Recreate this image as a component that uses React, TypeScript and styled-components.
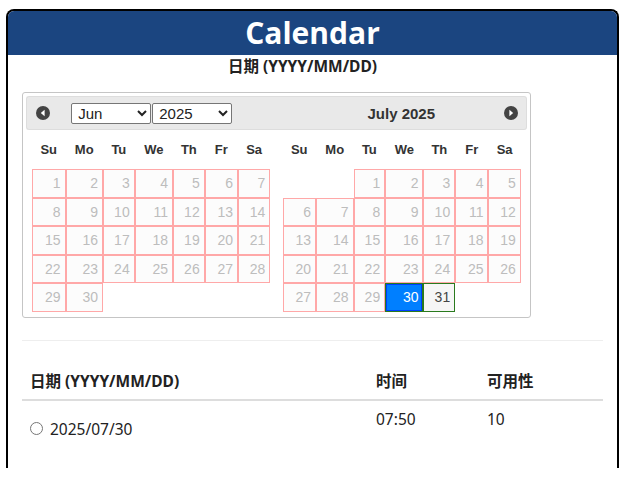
import React, { FC } from 'react';
import styled, { createGlobalStyle } from 'styled-components';

const GlobalStyle = createGlobalStyle`
    html, body {
        margin: 0;
        padding: 0;
        background: #fff;
    }
    body {
        font-family: 'Noto Sans', 'Noto Sans CJK SC', sans-serif;
        color: #222;
    }
`;

const Page = styled.div`
    padding: 9px 7px 0 6px;
`;

const Frame = styled.div`
    box-sizing: border-box;
    height: 459px;
    border: 2px solid #000;
    border-bottom: none;
    border-radius: 8px 8px 0 0;
    overflow: hidden;
`;

const TitleBar = styled.h1`
    margin: 0;
    height: 44px;
    background: #1b4580;
    color: #fff;
    font-family: 'Open Sans', sans-serif;
    font-weight: 700;
    font-size: 30px;
    line-height: 44px;
    text-align: center;
`;

const Subtitle = styled.div`
    padding-right: 20px;
    font-weight: 700;
    font-size: 15.5px;
    line-height: 22px;
    text-align: center;
    color: #222;
`;

const Content = styled.div`
    padding: 0 14px;
`;

const Datepicker = styled.div`
    box-sizing: border-box;
    width: 509px;
    margin-top: 15px;
    padding: 3px 3px 5px;
    border: 1px solid #c5c5c5;
    border-radius: 3px;
    display: grid;
    grid-template-columns: 1fr 1fr;
    font-family: 'Liberation Sans', Arial, sans-serif;
`;

const Group = styled.div`
    display: flex;
    flex-direction: column;
`;

const GroupHeader = styled.div<{ $last?: boolean }>`
    box-sizing: border-box;
    height: 34px;
    background: #e9e9e9;
    border: 1px solid #dddddd;
    border-left-width: ${({ $last }) => ($last ? 0 : 1)}px;
    border-right-width: ${({ $last }) => ($last ? 1 : 0)}px;
    border-radius: ${({ $last }) => ($last ? '0 3px 3px 0' : '3px 0 0 3px')};
    display: grid;
    grid-template-columns: 1fr auto 1fr;
    align-items: center;
`;

const NavIcon = styled.svg<{ $side: 'start' | 'end' }>`
    width: 14px;
    height: 14px;
    justify-self: ${({ $side }) => $side};
    margin: ${({ $side }) => ($side === 'start' ? '0 0 0 9px' : '0 8px 0 0')};
    grid-column: ${({ $side }) => ($side === 'start' ? 1 : 3)};
    grid-row: 1;
`;

const Selects = styled.div`
    grid-column: 2;
    grid-row: 1;
    display: flex;
    gap: 1px;
`;

const Select = styled.select`
    box-sizing: border-box;
    width: 80px;
    height: 21px;
    font-family: 'Liberation Sans', Arial, sans-serif;
    font-size: 15px;
    color: #222;
    border: 1px solid #767676;
    border-radius: 2px;
    background: #fff;
    padding: 0 2px;
`;

const MonthTitle = styled.div`
    grid-column: 2;
    grid-row: 1;
    font-weight: 700;
    font-size: 15px;
    color: #333;
`;

const columns = '33.5px 37.5px 31.7px 38.3px 31.7px 33.3px 32.4px';

const DayNames = styled.div`
    display: grid;
    grid-template-columns: ${columns};
    height: 39px;
    align-items: center;
    padding-left: 6px;
`;

const DayName = styled.span`
    text-align: center;
    font-weight: 700;
    font-size: 13px;
    color: #333;
`;

const Days = styled.div`
    display: grid;
    grid-template-columns: ${columns};
    grid-auto-rows: 28.5px;
    padding-left: 6px;
`;

type CellKind = 'disabled' | 'active' | 'available' | 'empty';

const cellBorder: Record<CellKind, string> = {
    disabled: '1px solid #ffa8a8',
    active: '1px solid #2a7a1e',
    available: '1px solid #2a7a1e',
    empty: '1px solid transparent',
};

const Cell = styled.div<{ $kind: CellKind }>`
    box-sizing: border-box;
    border: ${({ $kind }) => cellBorder[$kind]};
    background: ${({ $kind }) =>
        $kind === 'disabled' ? '#fcfcfc' : $kind === 'empty' ? 'transparent' : '#f6f6f6'};
    display: flex;
`;

const CellInner = styled.span<{ $kind: CellKind }>`
    flex: 1;
    box-sizing: border-box;
    border: 1px solid
        ${({ $kind }) => ($kind === 'active' ? '#003eff' : 'transparent')};
    background: ${({ $kind }) => ($kind === 'active' ? '#007fff' : 'transparent')};
    color: ${({ $kind }) =>
        $kind === 'active' ? '#fff' : $kind === 'available' ? '#454545' : '#bdbdbd'};
    font-size: 14px;
    padding-right: 3px;
    display: flex;
    align-items: center;
    justify-content: flex-end;
`;

const Divider = styled.hr`
    margin: 22px 0 0;
    border: 0;
    border-top: 1px solid #eeeeee;
`;

const Table = styled.table`
    width: 100%;
    table-layout: fixed;
    margin-top: 22px;
    border-collapse: collapse;
    font-size: 15.5px;
    color: #222;
`;

const Th = styled.th<{ $w?: number }>`
    width: ${({ $w }) => ($w ? `${$w}px` : 'auto')};
    padding: 8px;
    text-align: left;
    font-weight: 700;
    line-height: 20px;
    vertical-align: bottom;
    border-bottom: 2px solid #dddddd;
    white-space: nowrap;
`;

const Td = styled.td`
    padding: 8px;
    line-height: 20px;
    vertical-align: top;
`;

const DateLabel = styled.label`
    display: flex;
    align-items: center;
    padding-top: 10px;
`;

const Radio = styled.input`
    width: 13px;
    height: 13px;
    margin: 0 7px 0 0;
`;

const WEEK = ['Su', 'Mo', 'Tu', 'We', 'Th', 'Fr', 'Sa'];

interface Month {
    offset: number;
    days: number;
}

const dayKind = (month: 'june' | 'july', day: number): CellKind => {
    if (month === 'july' && day === 30) return 'active';
    if (month === 'july' && day === 31) return 'available';
    return 'disabled';
};

const Prev: FC = () => (
    <NavIcon $side="start" viewBox="0 0 14 14">
        <circle cx="7" cy="7" r="7" fill="#444" />
        <path d="M8.6 3.8 L4.8 7 L8.6 10.2 Z" fill="#fff" />
    </NavIcon>
);

const Next: FC = () => (
    <NavIcon $side="end" viewBox="0 0 14 14">
        <circle cx="7" cy="7" r="7" fill="#444" />
        <path d="M5.4 3.8 L9.2 7 L5.4 10.2 Z" fill="#fff" />
    </NavIcon>
);

const MonthGrid: FC<{ name: 'june' | 'july'; month: Month }> = ({ name, month }) => {
    const cells: React.ReactNode[] = [];
    for (let i = 0; i < month.offset; i++) {
        cells.push(<Cell key={`e${i}`} $kind="empty" />);
    }
    for (let d = 1; d <= month.days; d++) {
        const kind = dayKind(name, d);
        cells.push(
            <Cell key={d} $kind={kind}>
                <CellInner $kind={kind}>{d}</CellInner>
            </Cell>
        );
    }
    return (
        <>
            <DayNames>
                {WEEK.map((w) => (
                    <DayName key={w}>{w}</DayName>
                ))}
            </DayNames>
            <Days>{cells}</Days>
        </>
    );
};

const App: FC = () => (
    <Page>
        <GlobalStyle />
        <Frame>
            <TitleBar>Calendar</TitleBar>
            <Subtitle>日期 (YYYY/MM/DD)</Subtitle>
            <Content>
                <Datepicker>
                    <Group>
                        <GroupHeader>
                            <Prev />
                            <Selects>
                                <Select defaultValue="6">
                                    <option value="6">Jun</option>
                                    <option value="7">Jul</option>
                                </Select>
                                <Select defaultValue="2025">
                                    <option value="2025">2025</option>
                                </Select>
                            </Selects>
                        </GroupHeader>
                        <MonthGrid name="june" month={{ offset: 0, days: 30 }} />
                    </Group>
                    <Group>
                        <GroupHeader $last>
                            <MonthTitle>July 2025</MonthTitle>
                            <Next />
                        </GroupHeader>
                        <MonthGrid name="july" month={{ offset: 2, days: 31 }} />
                    </Group>
                </Datepicker>
                <Divider />
                <Table>
                    <colgroup>
                        <col style={{ width: 346 }} />
                        <col style={{ width: 111 }} />
                        <col />
                    </colgroup>
                    <thead>
                        <tr>
                            <Th>日期 (YYYY/MM/DD)</Th>
                            <Th>时间</Th>
                            <Th>可用性</Th>
                        </tr>
                    </thead>
                    <tbody>
                        <tr>
                            <Td>
                                <DateLabel>
                                    <Radio type="radio" name="slot" />
                                    2025/07/30
                                </DateLabel>
                            </Td>
                            <Td>07:50</Td>
                            <Td>10</Td>
                        </tr>
                    </tbody>
                </Table>
            </Content>
        </Frame>
    </Page>
);

export default App;
